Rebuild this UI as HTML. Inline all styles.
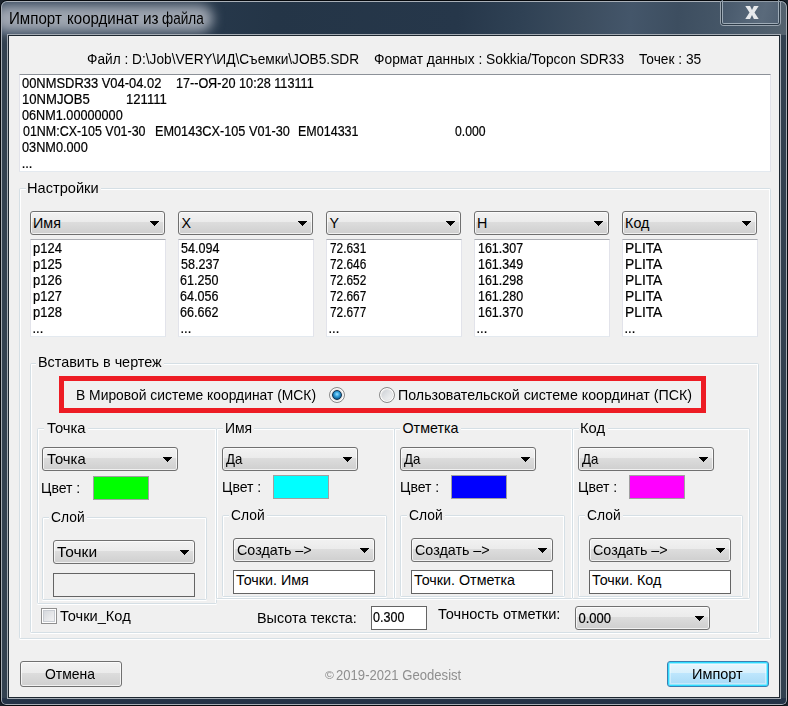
<!DOCTYPE html>
<html><head><meta charset="utf-8">
<style>
*{box-sizing:border-box;margin:0;padding:0}
html,body{width:788px;height:706px;overflow:hidden;background:#1a222b}
body{position:relative;font-family:"Liberation Sans",sans-serif;color:#000}
.a{position:absolute}
.t{position:absolute;white-space:pre;line-height:16px;font-size:14px}
.t.b{-webkit-text-stroke:0.2px currentColor}
#frame{position:absolute;left:0;top:0;width:788px;height:706px;border-radius:7px 7px 6px 6px;overflow:hidden;
 background:#324150;border:1px solid #05080c}
#tbar{position:absolute;left:0;top:0;width:786px;height:34px;
 background:linear-gradient(95deg,#33455a 0%,#2a3c50 15%,#243547 35%,#26374a 58%,#2f4154 66%,#3c4d5f 74%,#44566a 80%,#3d4e60 86%,#475869 93%,#55636f 100%)}
#frameinner{position:absolute;left:0;top:0;right:0;bottom:0;border-radius:6px 6px 5px 5px;border:1px solid #a5acb4;border-color:#a9b0b8 #a5acb4 #a5acb4 #a5acb4}
#glow{position:absolute;left:-8px;top:4px;width:220px;height:27px;border-radius:14px;background:rgba(165,172,182,.95);filter:blur(6px)}
#title{position:absolute;left:9px;top:8.8px;font-size:14.74px;line-height:20px;color:#000;white-space:pre;transform:scaleY(1.05);transform-origin:0 15.2px}
#client{position:absolute;left:9px;top:36px;width:770px;height:661px;background:#f0f0f0}
#clientb{position:absolute;left:7px;top:34px;width:774px;height:665px;border:1px solid #a5acb4;}
#clientb2{position:absolute;left:8px;top:35px;width:772px;height:663px;border:1px solid #1d2730;}
#close{position:absolute;left:720px;top:1px;width:61px;height:25px;border:1px solid #9aa5b0;border-top:none;border-radius:0 0 4px 4px;
 background:linear-gradient(105deg,#46576a 0%,#536476 45%,#5a6a7b 70%,#506072 100%)}
#close:before{content:"";position:absolute;left:0;top:-1px;right:0;bottom:0;border:1px solid #2c3a47;border-top:none;border-radius:0 0 3px 3px}
#close:after{content:"";position:absolute;left:1px;top:-1px;right:1px;bottom:1px;border:1px solid rgba(185,196,206,.75);border-top:none;border-radius:0 0 2px 2px}
.edit{position:absolute;background:#fff;border:1px solid;border-color:#abadb3 #e2e3ea #e3e9ef #e2e3ea}
.gb{position:absolute;border:1px solid #d5dfe5;border-radius:1.5px;box-shadow:inset 1px 1px 0 #fff,inset -1px 0 0 #fff,0 1px 0 #fff}
.glbg{position:absolute;background:#f0f0f0}
.cb{position:absolute;border:1px solid #707070;border-radius:3px;height:24px;
 background:linear-gradient(#f2f2f2 0,#ebebeb 10px,#dddddd 10px,#cfcfcf 100%);box-shadow:inset 0 0 0 1px rgba(255,255,255,.7)}
.cb .ct{position:absolute;white-space:pre;font-size:14px;line-height:16px}
.cb .ar{position:absolute;right:5px;top:9px;width:9px;height:5px;background:#000;clip-path:polygon(0 0,9px 0,9px 1px,8px 1px,8px 2px,7px 2px,7px 3px,6px 3px,6px 4px,5px 4px,5px 5px,4px 5px,4px 4px,3px 4px,3px 3px,2px 3px,2px 2px,1px 2px,1px 1px,0 1px)}
.sw{position:absolute;width:56px;height:24px;border:1px solid #a0a0a0}
.tb{position:absolute;border:1px solid #646464;height:24px}
.btn{position:absolute;height:26px;border:1px solid #707070;border-radius:3px;
 background:linear-gradient(#f2f2f2 0,#ebebeb 11px,#dddddd 11px,#cfcfcf 100%);box-shadow:inset 0 0 0 1px rgba(255,255,255,.7)}
.btn.def{border-color:#3c7fb1;background:linear-gradient(#eaf6fd 0,#d9f0fc 11px,#bee6fd 11px,#a7d9f5 100%);box-shadow:inset 0 0 0 1px #2fdcff,inset 0 0 0 2px rgba(120,230,255,.7),inset 0 0 0 3px rgba(255,255,255,.35)}
.rad{position:absolute;width:16px;height:16px;border-radius:50%;border:1px solid #8a8a8a;
 background:linear-gradient(135deg,#c4c8ce 0,#dfe1e4 45%,#fafafa 100%);box-shadow:inset 0 0 0 1px #fff,inset 0 0 0 2px #e4e4e4}
.rad .dot{position:absolute;left:2px;top:2px;width:10px;height:10px;border-radius:50%;background:radial-gradient(circle at 50% 40%,#9fe0ff 0,#38a6e0 35%,#0d5d95 75%,#08365c 100%);border:1px solid #10324f}
.chk{position:absolute;width:16px;height:16px;border:1px solid #8f8f8f;background:linear-gradient(135deg,#cfd3d8 0,#e8e9eb 60%,#f6f6f6 100%);box-shadow:inset 0 0 0 1px #fff,inset 0 0 0 2px #c8ccd2}
</style></head><body>
<div id="frame"><div id="tbar"></div><div class="a" style="left:0;top:697px;width:786px;height:8px;background:#243347"></div><div id="glow"></div><div id="frameinner"></div></div>

<div id="close"><svg class="a" style="left:24px;top:5px" width="14" height="13" viewBox="0 0 13.4 13"><path d="M0 0 L4.8 0 L6.7 4.1 L8.6 0 L13.4 0 L9.2 6.5 L13.4 13 L8.6 13 L6.7 8.9 L4.8 13 L0 13 L4.2 6.5 Z" fill="#e6e9ec"/></svg></div>
<div class="a" style="left:720px;top:1px;width:61px;height:1px;background:#8f9aa5"></div><div id="clientb"></div><div id="clientb2"></div>
<div id="client"></div>
<div id="t8ab03ee0" class="t" style="left:8.70px;top:10.08px;font-size:15.350px;transform:scale(0.9844,1.07);transform-origin:0 2.73px;">Импорт</div>
<div id="tfdc29162" class="t" style="left:66.70px;top:10.08px;font-size:15.350px;transform:scale(0.9810,1.07);transform-origin:0 2.73px;">координат</div>
<div id="t62aae036" class="t" style="left:143.00px;top:10.08px;font-size:15.350px;transform:scale(1.0000,1.07);transform-origin:0 2.73px;">из</div>
<div id="t879b527d" class="t" style="left:161.85px;top:10.08px;font-size:15.350px;transform:scale(0.8827,1.07);transform-origin:0 2.73px;">файла</div>
<div id="t1afd432d" class="t" style="left:87.48px;top:50.99px;font-size:13.600px;transform:scale(1.0072,1.07);transform-origin:0 3.33px;">Файл : D:\Job\VERY\ИД\Съемки\JOB5.SDR</div>
<div id="ta22c7376" class="t" style="left:374.19px;top:50.99px;font-size:13.600px;transform:scale(1.0148,1.07);transform-origin:0 3.33px;">Формат данных : Sokkia/Topcon SDR33</div>
<div id="tb0456b0d" class="t" style="left:639.31px;top:50.99px;font-size:13.600px;transform:scale(1.0107,1.07);transform-origin:0 3.33px;">Точек : 35</div>
<div class="edit" style="left:19px;top:74px;width:752px;height:98px;border-top-color:#8c9198"></div>
<div id="t8990fcc3" class="t b" style="left:22.33px;top:75.40px;font-size:13.000px;transform:scale(0.9938,1.1);transform-origin:0 3.53px;">00NMSDR33 V04-04.02</div>
<div id="t68adea9b" class="t b" style="left:175.96px;top:75.40px;font-size:13.000px;transform:scale(0.9741,1.1);transform-origin:0 3.53px;">17--ОЯ-20 10:28 113111</div>
<div id="t05585313" class="t b" style="left:21.64px;top:91.40px;font-size:13.000px;transform:scale(1.0072,1.1);transform-origin:0 3.53px;">10NMJOB5</div>
<div id="t7e796ffd" class="t b" style="left:125.55px;top:91.40px;font-size:13.000px;transform:scale(1.0109,1.1);transform-origin:0 3.53px;">121111</div>
<div id="t41ef04a7" class="t b" style="left:22.20px;top:107.40px;font-size:13.000px;transform:scale(0.9741,1.1);transform-origin:0 3.53px;">06NM1.00000000</div>
<div id="t00c50bda" class="t b" style="left:22.50px;top:123.40px;font-size:13.000px;transform:scale(0.9578,1.1);transform-origin:0 3.53px;">01NM:CX-105 V01-30</div>
<div id="t5589005e" class="t b" style="left:154.75px;top:123.40px;font-size:13.000px;transform:scale(0.9773,1.1);transform-origin:0 3.53px;">EM0143CX-105 V01-30</div>
<div id="t3af7ad49" class="t b" style="left:297.58px;top:123.40px;font-size:13.000px;transform:scale(0.9623,1.1);transform-origin:0 3.53px;">EM014331</div>
<div id="t6c153758" class="t b" style="left:455.36px;top:123.40px;font-size:13.000px;transform:scale(0.9409,1.1);transform-origin:0 3.53px;">0.000</div>
<div id="t9ef5dec2" class="t b" style="left:22.19px;top:139.40px;font-size:13.000px;transform:scale(0.9781,1.1);transform-origin:0 3.53px;">03NM0.000</div>
<div id="tcca342a3" class="t b" style="left:21.65px;top:155.40px;font-size:13.000px;transform:scale(1.0000,1.1);transform-origin:0 3.53px;">...</div>
<div class="gb" style="left:19px;top:188px;width:752px;height:451px"></div>
<div class="glbg" style="left:25.8px;top:180.9px;width:75.4px;height:16px"></div>
<div id="t8e8cd77d" class="t" style="left:27.48px;top:179.95px;font-size:14.300px;transform:scale(1.0216,1.0);transform-origin:0 3.09px;">Настройки</div>
<div class="cb" style="left:30px;top:211px;width:135px;height:24px"><div class="ar"></div></div>
<div id="tde096ea3" class="t" style="left:33.08px;top:215.25px;font-size:14.300px;">Имя</div>
<div class="edit" style="left:30px;top:239px;width:136px;height:98px;"></div>
<div id="te5bb94f4" class="t b" style="left:32.56px;top:240.40px;font-size:13.000px;transform:scale(0.9981,1.1);transform-origin:0 3.53px;">p124</div>
<div id="t8ca0c0cf" class="t b" style="left:32.54px;top:256.40px;font-size:13.000px;transform:scale(0.9981,1.1);transform-origin:0 3.53px;">p125</div>
<div id="t39ddf0dd" class="t b" style="left:32.54px;top:272.40px;font-size:13.000px;transform:scale(0.9981,1.1);transform-origin:0 3.53px;">p126</div>
<div id="tb075aae2" class="t b" style="left:32.54px;top:288.40px;font-size:13.000px;transform:scale(0.9981,1.1);transform-origin:0 3.53px;">p127</div>
<div id="tcb8dce54" class="t b" style="left:32.54px;top:304.40px;font-size:13.000px;transform:scale(0.9981,1.1);transform-origin:0 3.53px;">p128</div>
<div id="t7fcdf2cc" class="t b" style="left:32.43px;top:320.40px;font-size:13.000px;transform:scale(1.0000,1.1);transform-origin:0 3.53px;">...</div>
<div class="cb" style="left:178px;top:211px;width:135px;height:24px"><div class="ar"></div></div>
<div id="t109c7cff" class="t" style="left:181.54px;top:215.25px;font-size:14.300px;">X</div>
<div class="edit" style="left:178px;top:239px;width:136px;height:98px;"></div>
<div id="t042655cb" class="t b" style="left:180.64px;top:240.40px;font-size:13.000px;transform:scale(0.9655,1.1);transform-origin:0 3.53px;">54.094</div>
<div id="t86f456e6" class="t b" style="left:180.64px;top:256.40px;font-size:13.000px;transform:scale(0.9655,1.1);transform-origin:0 3.53px;">58.237</div>
<div id="t767f833f" class="t b" style="left:180.45px;top:272.40px;font-size:13.000px;transform:scale(0.9655,1.1);transform-origin:0 3.53px;">61.250</div>
<div id="te0226e29" class="t b" style="left:180.45px;top:288.40px;font-size:13.000px;transform:scale(0.9655,1.1);transform-origin:0 3.53px;">64.056</div>
<div id="tc94e74f5" class="t b" style="left:180.45px;top:304.40px;font-size:13.000px;transform:scale(0.9655,1.1);transform-origin:0 3.53px;">66.662</div>
<div id="t95931482" class="t b" style="left:180.43px;top:320.40px;font-size:13.000px;transform:scale(1.0000,1.1);transform-origin:0 3.53px;">...</div>
<div class="cb" style="left:326px;top:211px;width:135px;height:24px"><div class="ar"></div></div>
<div id="tb7013acb" class="t" style="left:329.57px;top:215.25px;font-size:14.300px;">Y</div>
<div class="edit" style="left:326px;top:239px;width:136px;height:98px;"></div>
<div id="t60620f74" class="t b" style="left:329.51px;top:240.40px;font-size:13.000px;transform:scale(0.9113,1.1);transform-origin:0 3.53px;">72.631</div>
<div id="t1162d181" class="t b" style="left:329.51px;top:256.40px;font-size:13.000px;transform:scale(0.9113,1.1);transform-origin:0 3.53px;">72.646</div>
<div id="t2c62cc64" class="t b" style="left:329.51px;top:272.40px;font-size:13.000px;transform:scale(0.9113,1.1);transform-origin:0 3.53px;">72.652</div>
<div id="tbdbc251a" class="t b" style="left:329.51px;top:288.40px;font-size:13.000px;transform:scale(0.9113,1.1);transform-origin:0 3.53px;">72.667</div>
<div id="tbfdefcc7" class="t b" style="left:329.51px;top:304.40px;font-size:13.000px;transform:scale(0.9113,1.1);transform-origin:0 3.53px;">72.677</div>
<div id="t511d718b" class="t b" style="left:328.43px;top:320.40px;font-size:13.000px;transform:scale(1.0000,1.1);transform-origin:0 3.53px;">...</div>
<div class="cb" style="left:474px;top:211px;width:135px;height:24px"><div class="ar"></div></div>
<div id="t3a632bd6" class="t" style="left:477.10px;top:215.25px;font-size:14.300px;">H</div>
<div class="edit" style="left:474px;top:239px;width:136px;height:98px;"></div>
<div id="t51b872b4" class="t b" style="left:477.51px;top:240.40px;font-size:13.000px;transform:scale(0.9589,1.1);transform-origin:0 3.53px;">161.307</div>
<div id="t5fe49733" class="t b" style="left:477.51px;top:256.40px;font-size:13.000px;transform:scale(0.9589,1.1);transform-origin:0 3.53px;">161.349</div>
<div id="tf88d9273" class="t b" style="left:477.51px;top:272.40px;font-size:13.000px;transform:scale(0.9589,1.1);transform-origin:0 3.53px;">161.298</div>
<div id="t4c6c8e61" class="t b" style="left:477.51px;top:288.40px;font-size:13.000px;transform:scale(0.9589,1.1);transform-origin:0 3.53px;">161.280</div>
<div id="t261a9fd1" class="t b" style="left:477.51px;top:304.40px;font-size:13.000px;transform:scale(0.9589,1.1);transform-origin:0 3.53px;">161.370</div>
<div id="t249984e0" class="t b" style="left:476.43px;top:320.40px;font-size:13.000px;transform:scale(1.0000,1.1);transform-origin:0 3.53px;">...</div>
<div class="cb" style="left:622px;top:211px;width:135px;height:24px"><div class="ar"></div></div>
<div id="t19b47d3b" class="t" style="left:625.12px;top:215.25px;font-size:14.300px;">Код</div>
<div class="edit" style="left:622px;top:239px;width:136px;height:98px;"></div>
<div id="t69f3e4e4" class="t b" style="left:624.79px;top:240.40px;font-size:13.000px;transform:scale(1.0617,1.1);transform-origin:0 3.53px;">PLITA</div>
<div id="tf1143d09" class="t b" style="left:624.79px;top:256.40px;font-size:13.000px;transform:scale(1.0617,1.1);transform-origin:0 3.53px;">PLITA</div>
<div id="t2338577a" class="t b" style="left:624.79px;top:272.40px;font-size:13.000px;transform:scale(1.0617,1.1);transform-origin:0 3.53px;">PLITA</div>
<div id="t14b8dc4d" class="t b" style="left:624.79px;top:288.40px;font-size:13.000px;transform:scale(1.0617,1.1);transform-origin:0 3.53px;">PLITA</div>
<div id="t31a5a47d" class="t b" style="left:624.79px;top:304.40px;font-size:13.000px;transform:scale(1.0617,1.1);transform-origin:0 3.53px;">PLITA</div>
<div id="tafd1ddcd" class="t b" style="left:624.43px;top:320.40px;font-size:13.000px;transform:scale(1.0000,1.1);transform-origin:0 3.53px;">...</div>
<div class="gb" style="left:30px;top:363px;width:729px;height:270px"></div>
<div class="glbg" style="left:36.4px;top:355.4px;width:128.1px;height:16px"></div>
<div id="t4d60aa5f" class="t" style="left:38.10px;top:354.45px;font-size:14.300px;transform:scale(1.0064,1.0);transform-origin:0 3.09px;">Вставить в чертеж</div>
<div class="a" style="left:59px;top:376px;width:647px;height:37px;border:5px solid #ed1c24"></div>
<div id="ta2d33fd9" class="t" style="left:75.53px;top:386.85px;font-size:14.300px;transform:scale(0.9702,1.0);transform-origin:0 3.09px;">В Мировой системе координат (МСК)</div>
<div id="t2e043d4e" class="t" style="left:397.64px;top:386.85px;font-size:14.300px;transform:scale(0.9954,1.0);transform-origin:0 3.09px;">Пользовательской системе координат (ПСК)</div>
<div class="rad" style="left:329px;top:387px"><div class="dot"></div></div>
<div class="rad" style="left:379px;top:387px"></div>
<div class="gb" style="left:37px;top:428px;width:180px;height:176px"></div>
<div class="glbg" style="left:43.5px;top:420.8px;width:44.099999999999994px;height:16px"></div>
<div id="t8a1627a4" class="t" style="left:46.55px;top:419.85px;font-size:14.300px;transform:scale(1.0371,1.0);transform-origin:0 3.09px;">Точка</div>
<div class="cb" style="left:42px;top:447px;width:136px;height:24px"><div class="ar"></div></div>
<div id="t890d619b" class="t" style="left:46.62px;top:451.25px;font-size:14.300px;transform:scale(1.0381,1.0);transform-origin:0 3.09px;">Точка</div>
<div id="t0e1454d8" class="t" style="left:41.40px;top:480.45px;font-size:14.300px;transform:scale(0.9819,1.0);transform-origin:0 3.09px;">Цвет :</div>
<div class="sw" style="left:93px;top:476px;background:#00ff00"></div>
<div class="gb" style="left:42px;top:517px;width:165px;height:83px"></div>
<div class="glbg" style="left:48.8px;top:510px;width:38.0px;height:16px"></div>
<div id="t0cc3f8db" class="t" style="left:51.43px;top:509.05px;font-size:14.300px;transform:scale(0.9668,1.0);transform-origin:0 3.09px;">Слой</div>
<div class="cb" style="left:53px;top:540px;width:142px;height:24px"><div class="ar"></div></div>
<div id="taee427ca" class="t" style="left:57.37px;top:543.75px;font-size:14.300px;transform:scale(1.0844,1.0);transform-origin:0 3.09px;">Точки</div>
<div class="tb" style="left:53px;top:573px;width:142px;height:24px"></div>
<div class="gb" style="left:216px;top:428px;width:179px;height:171px"></div>
<div class="glbg" style="left:222.7px;top:420.8px;width:30.900000000000006px;height:16px"></div>
<div id="tbbf1e1c7" class="t" style="left:224.65px;top:419.85px;font-size:14.300px;transform:scale(0.9756,1.0);transform-origin:0 3.09px;">Имя</div>
<div class="cb" style="left:222px;top:447px;width:136px;height:24px"><div class="ar"></div></div>
<div id="tb6e90232" class="t" style="left:225.52px;top:450.85px;font-size:14.300px;transform:scale(0.9274,1.0);transform-origin:0 3.09px;">Да</div>
<div id="t9b98c497" class="t" style="left:222.29px;top:479.45px;font-size:14.300px;transform:scale(0.9813,1.0);transform-origin:0 3.09px;">Цвет :</div>
<div class="sw" style="left:273px;top:475px;background:#00ffff"></div>
<div class="gb" style="left:222px;top:515px;width:165px;height:82px"></div>
<div class="glbg" style="left:228.8px;top:508px;width:38.0px;height:16px"></div>
<div id="td85f41b1" class="t" style="left:231.43px;top:507.05px;font-size:14.300px;transform:scale(0.9668,1.0);transform-origin:0 3.09px;">Слой</div>
<div class="cb" style="left:233px;top:538px;width:142px;height:24px"><div class="ar"></div></div>
<div id="t75aa02bc" class="t" style="left:236.94px;top:542.05px;font-size:14.300px;transform:scale(1.0011,1.0);transform-origin:0 3.09px;">Создать –></div>
<div class="tb" style="left:233px;top:570px;width:142px;height:24px;background:#fff"></div>
<div id="t04cf8d5d" class="t" style="left:236.12px;top:572.05px;font-size:14.300px;">Точки. Имя</div>
<div class="gb" style="left:394px;top:428px;width:179px;height:171px"></div>
<div class="glbg" style="left:400.2px;top:420.8px;width:61.30000000000001px;height:16px"></div>
<div id="t02c33265" class="t" style="left:402.47px;top:419.85px;font-size:14.300px;">Отметка</div>
<div class="cb" style="left:400px;top:447px;width:136px;height:24px"><div class="ar"></div></div>
<div id="t6c92d801" class="t" style="left:403.52px;top:450.85px;font-size:14.300px;transform:scale(0.9274,1.0);transform-origin:0 3.09px;">Да</div>
<div id="t85b67042" class="t" style="left:400.29px;top:479.45px;font-size:14.300px;transform:scale(0.9813,1.0);transform-origin:0 3.09px;">Цвет :</div>
<div class="sw" style="left:451px;top:475px;background:#0000ff"></div>
<div class="gb" style="left:400px;top:515px;width:165px;height:82px"></div>
<div class="glbg" style="left:406.8px;top:508px;width:38.0px;height:16px"></div>
<div id="t5864233c" class="t" style="left:409.43px;top:507.05px;font-size:14.300px;transform:scale(0.9668,1.0);transform-origin:0 3.09px;">Слой</div>
<div class="cb" style="left:411px;top:538px;width:142px;height:24px"><div class="ar"></div></div>
<div id="t4ade6130" class="t" style="left:414.94px;top:542.05px;font-size:14.300px;transform:scale(1.0011,1.0);transform-origin:0 3.09px;">Создать –></div>
<div class="tb" style="left:411px;top:570px;width:142px;height:24px;background:#fff"></div>
<div id="tc0358f5d" class="t" style="left:414.10px;top:572.05px;font-size:14.300px;">Точки. Отметка</div>
<div class="gb" style="left:572px;top:428px;width:178px;height:171px"></div>
<div class="glbg" style="left:578.5px;top:420.8px;width:29.600000000000023px;height:16px"></div>
<div id="t2a3e7dff" class="t" style="left:580.42px;top:419.85px;font-size:14.300px;transform:scale(1.0318,1.0);transform-origin:0 3.09px;">Код</div>
<div class="cb" style="left:578px;top:447px;width:136px;height:24px"><div class="ar"></div></div>
<div id="t9c955682" class="t" style="left:581.52px;top:450.85px;font-size:14.300px;transform:scale(0.9274,1.0);transform-origin:0 3.09px;">Да</div>
<div id="tf9109f3c" class="t" style="left:578.29px;top:479.45px;font-size:14.300px;transform:scale(0.9813,1.0);transform-origin:0 3.09px;">Цвет :</div>
<div class="sw" style="left:629px;top:475px;background:#ff00ff"></div>
<div class="gb" style="left:578px;top:515px;width:165px;height:82px"></div>
<div class="glbg" style="left:584.8px;top:508px;width:38.0px;height:16px"></div>
<div id="tef14f6f0" class="t" style="left:587.43px;top:507.05px;font-size:14.300px;transform:scale(0.9668,1.0);transform-origin:0 3.09px;">Слой</div>
<div class="cb" style="left:589px;top:538px;width:142px;height:24px"><div class="ar"></div></div>
<div id="t9e11cde0" class="t" style="left:592.94px;top:542.05px;font-size:14.300px;transform:scale(1.0011,1.0);transform-origin:0 3.09px;">Создать –></div>
<div class="tb" style="left:589px;top:570px;width:142px;height:24px;background:#fff"></div>
<div id="t73d71ea8" class="t" style="left:592.12px;top:572.05px;font-size:14.300px;">Точки. Код</div>
<div class="chk" style="left:41px;top:608px"></div>
<div id="t55d631f7" class="t" style="left:60.42px;top:608.45px;font-size:14.300px;transform:scale(1.0212,1.0);transform-origin:0 3.09px;">Точки_Код</div>
<div id="tda069f07" class="t" style="left:256.53px;top:610.45px;font-size:14.300px;transform:scale(1.0059,1.0);transform-origin:0 3.09px;">Высота текста:</div>
<div class="tb" style="left:371px;top:606px;width:56px;height:24px;background:#fff"></div>
<div id="t6b47ddac" class="t b" style="left:372.79px;top:608.60px;font-size:13.000px;transform:scale(0.9663,1.1);transform-origin:0 3.53px;">0.300</div>
<div id="t5556783e" class="t" style="left:437.76px;top:606.05px;font-size:14.300px;transform:scale(1.0207,1.0);transform-origin:0 3.09px;">Точность отметки:</div>
<div class="cb" style="left:575px;top:606px;width:135px;height:24px"><div class="ar"></div></div>
<div id="t7b066a54" class="t b" style="left:578.41px;top:610.30px;font-size:13.000px;transform:scale(1.0000,1.1);transform-origin:0 3.53px;">0.000</div>
<div class="btn" style="left:20px;top:661px;width:102px"></div>
<div id="td7b4ddc4" class="t" style="left:45.42px;top:666.35px;font-size:14.300px;transform:scale(0.9741,1.0);transform-origin:0 3.09px;">Отмена</div>
<div class="btn def" style="left:667px;top:661px;width:102px"></div>
<div id="t37a68b24" class="t" style="left:691.97px;top:666.35px;font-size:14.300px;transform:scale(1.0142,1.0);transform-origin:0 3.09px;">Импорт</div>
<div id="t045633dc" class="t" style="left:324.70px;top:666.59px;font-size:11.000px;color:#8a8a8a;transform:scale(1.0979,1.0);transform-origin:0 4.22px;">©</div>
<div id="td31d77cb" class="t" style="left:336.36px;top:666.50px;font-size:13.000px;color:#8f8f8f;transform:scale(1.0073,1.1);transform-origin:0 3.53px;">2019-2021 Geodesist</div>
</body></html>
